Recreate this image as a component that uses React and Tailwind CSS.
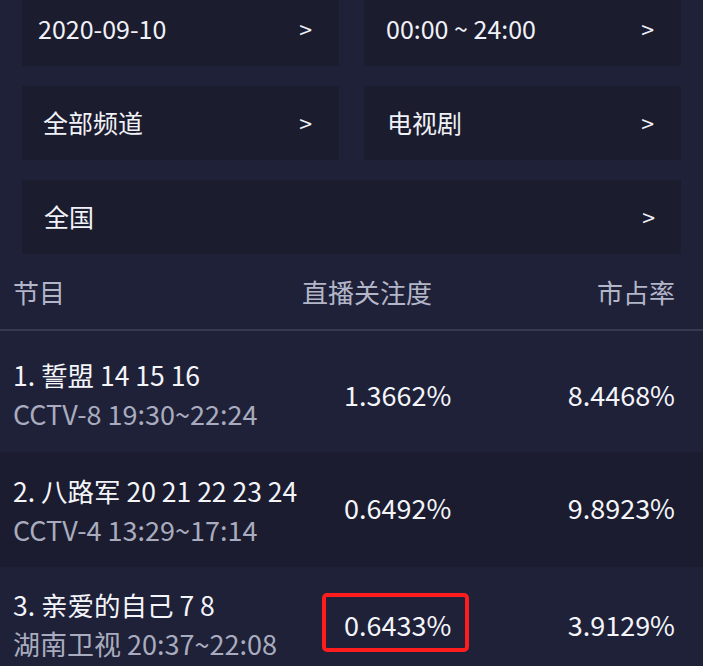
import React from "react";

const filters = [
  [
    { label: "2020-09-10", pad: "pl-4" },
    { label: "00:00 ~ 24:00", pad: "pl-[22px]" },
  ],
  [
    { label: "全部频道", pad: "pl-[21px]" },
    { label: "电视剧", pad: "pl-[23px]" },
  ],
];

const rows = [
  {
    title: "1. 誓盟 14 15 16",
    sub: "CCTV-8 19:30~22:24",
    focus: "1.3662%",
    share: "8.4468%",
    box: "h-[121px] pt-[24px] bg-[#1f2139]",
    vpad: "pt-[21px]",
  },
  {
    title: "2. 八路军 20 21 22 23 24",
    sub: "CCTV-4 13:29~17:14",
    focus: "0.6492%",
    share: "9.8923%",
    box: "h-[115px] pt-[19px] bg-[#1b1c2f]",
    vpad: "pt-[18px]",
  },
  {
    title: "3. 亲爱的自己 7 8",
    sub: "湖南卫视 20:37~22:08",
    focus: "0.6433%",
    share: "3.9129%",
    box: "h-[110px] pt-[18px] bg-[#1f2139]",
    vpad: "pt-[21px]",
    marked: true,
  },
];

const Chevron = () => <span className="text-[23px] leading-none text-[#eef0f6]">&gt;</span>;

const FilterCard = ({ label, pad, wide }) => (
  <div
    className={`flex h-[74px] items-center justify-between bg-[#1b1c2e] ${pad} ${
      wide ? "pr-[26px]" : "pr-[27px]"
    }`}
  >
    <span className="text-[25px] text-[#f1f2f7]">{label}</span>
    <Chevron />
  </div>
);

export default function App() {
  return (
    <div
      className="h-[666px] w-[703px] overflow-hidden bg-[#1f2139]"
      style={{ fontFamily: '"Noto Sans CJK SC", "Noto Sans", sans-serif' }}
    >
      {/* filters */}
      <div className="-mt-2 flex flex-col gap-5 px-[22px]">
        {filters.map((pair, i) => (
          <div key={i} className="grid grid-cols-2 gap-[25px]">
            {pair.map((f) => (
              <FilterCard key={f.label} {...f} />
            ))}
          </div>
        ))}
        <FilterCard label="全国" pad="pl-[22px]" wide />
      </div>

      {/* table header */}
      <div className="flex h-[77px] items-center border-b-2 border-[#363952] pl-[13px] pr-[28px] text-[26px] text-[#b3b6c8]">
        <span className="w-[289px]">节目</span>
        <span className="flex-1">直播关注度</span>
        <span>市占率</span>
      </div>

      {/* rows */}
      {rows.map((r) => (
        <div key={r.title} className={`flex pl-[13px] pr-[28px] ${r.box}`}>
          <div className="w-[331px] shrink-0">
            <div className="text-[26.5px] leading-[39px] text-[#f4f5f9]">{r.title}</div>
            <div className="text-[27px] leading-[39px] text-[#a9acbe]">{r.sub}</div>
          </div>
          <div className={`flex flex-1 items-start ${r.vpad}`}>
            <div className="relative text-[27px] leading-[38px] text-[#f4f5f9]">
              {r.focus}
              {r.marked && (
                <span className="absolute -left-[22px] -right-[18px] -top-[13px] -bottom-[8px] rounded-[5px] border-4 border-[#ff1c1c]" />
              )}
            </div>
            <div className="ml-auto text-[27px] leading-[38px] text-[#f4f5f9]">{r.share}</div>
          </div>
        </div>
      ))}
    </div>
  );
}
